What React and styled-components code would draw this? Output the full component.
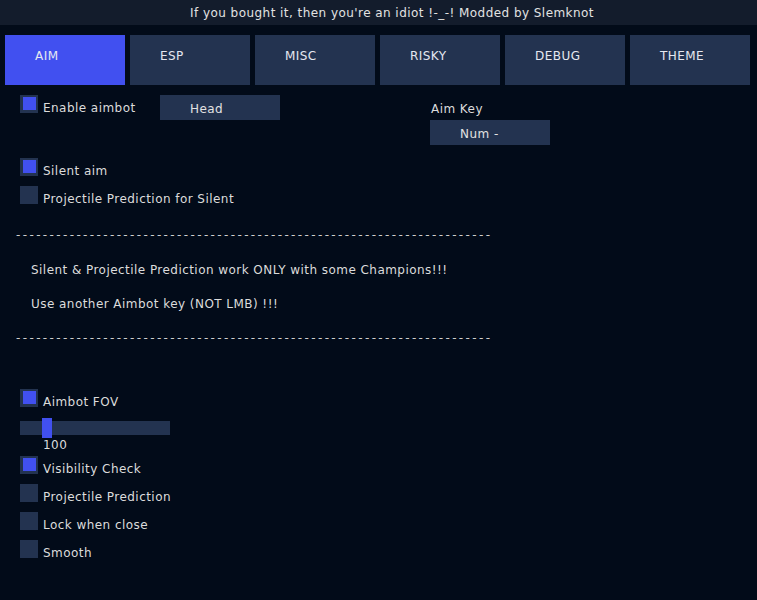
import React from "react";
import styled, { createGlobalStyle } from "styled-components";

const Global = createGlobalStyle`
  html, body { margin: 0; padding: 0; background: #020b19; }
  body {
    font-family: "DejaVu Sans", Verdana, sans-serif;
    font-size: 12px;
    letter-spacing: 0.45px;
    color: #dcdcdc;
  }
  * { box-sizing: border-box; }
`;

const Window = styled.div`
  width: 757px;
  height: 600px;
  background: #020b19;
  overflow: hidden;
`;

const TitleBar = styled.div`
  height: 25px;
  background: #131c2c;
  display: flex;
  align-items: center;
  padding-left: 190px;
  line-height: 14px;
  color: #e2e2e2;
  white-space: nowrap;
`;

const TabBar = styled.div`
  display: flex;
  gap: 5px;
  padding: 10px 5px 0;
`;

const Tab = styled.div`
  width: 120px;
  height: 50px;
  padding: 14px 0 0 30px;
  line-height: 14px;
  background: ${(p) => (p.$active ? "#4150f0" : "#233350")};
  color: #e6e8f0;
`;

const Content = styled.div`
  padding-left: 20px;
`;

const TopGrid = styled.div`
  display: grid;
  grid-template-columns: 140px 120px 150px 120px;
  align-items: start;
  margin-top: 10px;
`;

const Row = styled.div`
  display: flex;
  align-items: flex-start;
  gap: 5px;
  height: 18px;
  margin-top: ${(p) => p.$mt || 0}px;
`;

const Box = styled.div`
  width: 18px;
  height: 18px;
  flex: none;
  background: #233350;
  padding: 2px 2px 3px 3px;
`;

const Check = styled.div`
  width: 13px;
  height: 13px;
  background: #4150f0;
`;

const Label = styled.span`
  padding-top: 6px;
  line-height: 14px;
  white-space: nowrap;
`;

const Combo = styled.div`
  width: 120px;
  height: 25px;
  background: #233350;
  padding: 7px 0 0 30px;
  line-height: 14px;
  color: #e2e2e2;
  margin-top: ${(p) => p.$mt || 0}px;
`;

const KeyCol = styled.div`
  display: flex;
  flex-direction: column;
  padding-top: 7px;
`;

const KeyLabel = styled.div`
  line-height: 14px;
  padding-left: 1px;
`;

const Dashes = styled.div`
  margin-top: ${(p) => p.$mt}px;
  margin-left: -4px;
  line-height: 14px;
  letter-spacing: 2.38px;
  white-space: nowrap;
  color: #cfcfcf;
`;

const Note = styled.div`
  margin-top: ${(p) => p.$mt}px;
  padding-left: 11px;
  line-height: 14px;
  white-space: nowrap;
`;

const Slider = styled.div`
  position: relative;
  width: 150px;
  height: 14px;
  background: #233350;
  margin-top: 14px;
`;

const Grab = styled.div`
  position: absolute;
  top: -3px;
  width: 10px;
  height: 20px;
  background: #4150f0;
`;

const SliderValue = styled.div`
  padding-left: 23px;
  margin-top: 3px;
  line-height: 14px;
`;

const CheckRow = ({ checked, label, mt }) => (
  <Row $mt={mt}>
    <Box>{checked && <Check />}</Box>
    <Label>{label}</Label>
  </Row>
);

const tabs = ["AIM", "ESP", "MISC", "RISKY", "DEBUG", "THEME"];
const dashes = "-".repeat(71);

export default function App() {
  return (
    <Window>
      <Global />
      <TitleBar>If you bought it, then you're an idiot !-_-! Modded by Slemknot</TitleBar>
      <TabBar>
        {tabs.map((t, i) => (
          <Tab key={t} $active={i === 0}>{t}</Tab>
        ))}
      </TabBar>
      <Content>
        <TopGrid>
          <CheckRow checked label="Enable aimbot" />
          <Combo>Head</Combo>
          <div />
          <KeyCol>
            <KeyLabel>Aim Key</KeyLabel>
            <Combo $mt={4}>Num -</Combo>
          </KeyCol>
        </TopGrid>
        <CheckRow checked label="Silent aim" mt={13} />
        <CheckRow label="Projectile Prediction for Silent" mt={10} />
        <Dashes $mt={24}>{dashes}</Dashes>
        <Note $mt={21}>Silent &amp; Projectile Prediction work ONLY with some Champions!!!</Note>
        <Note $mt={20}>Use another Aimbot key (NOT LMB) !!!</Note>
        <Dashes $mt={20}>{dashes}</Dashes>
        <CheckRow checked label="Aimbot FOV" mt={44} />
        <Slider>
          <Grab style={{ left: 22 }} />
        </Slider>
        <SliderValue>100</SliderValue>
        <CheckRow checked label="Visibility Check" mt={4} />
        <CheckRow label="Projectile Prediction" mt={10} />
        <CheckRow label="Lock when close" mt={10} />
        <CheckRow label="Smooth" mt={10} />
      </Content>
    </Window>
  );
}
